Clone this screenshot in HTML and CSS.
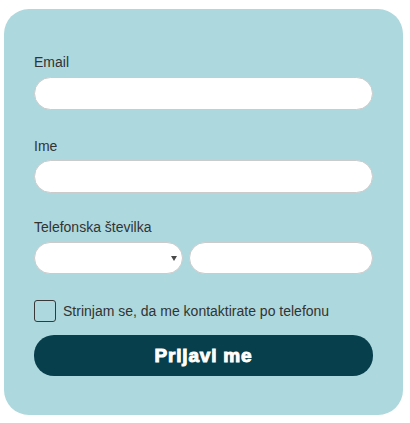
FILE: index.html
```html
<!DOCTYPE html>
<html>
<head>
	<meta charset="utf-8">
	<title>Prijava</title>
	<link rel="stylesheet" href="styles.css">
</head>
<body>
<form class="signup">
	<div class="field">
		<label class="field_name" for="email">Email</label>
		<input class="text_input" type="email" id="email">
	</div>
	<div class="field">
		<label class="field_name" for="name">Ime</label>
		<input class="text_input" type="text" id="name">
	</div>
	<div class="field field_phone">
		<label class="field_name" for="phone">Telefonska številka</label>
		<div class="phone_row">
			<div class="select_wrap">
				<select class="text_input" name="prefix"></select>
			</div>
			<input class="text_input" type="tel" id="phone">
		</div>
	</div>
	<label class="consent">
		<input type="checkbox" class="consent_box">
		<span>Strinjam se, da me kontaktirate po telefonu</span>
	</label>
	<button type="submit" class="submit">Prijavi me</button>
</form>
</body>
</html>
```

FILE: styles.css
```css
body {
	margin: 0;
	font-family: "Liberation Sans", Arial, sans-serif;
	background: white;
}
.signup {
	box-sizing: border-box;
	width: 399px;
	margin: 9px 0 0 4px;
	padding: 45px 30px 39px;
	background: #add8dd;
	border-radius: 25px;
}
.field {
	margin-bottom: 28px;
}
.field_phone {
	margin-bottom: 26px;
}
.field_name {
	display: block;
	font-size: 14px;
	line-height: 16px;
	color: #333;
	margin-bottom: 7px;
}
.field:nth-child(2) {
	margin-bottom: 26px;
}
.field:nth-child(2) .field_name {
	margin-bottom: 6px;
}
.text_input {
	box-sizing: border-box;
	display: block;
	width: 100%;
	height: 33px;
	margin: 0;
	padding: 0 14px;
	background: white;
	border: 1px solid #cbcbcb;
	border-radius: 17px;
	font-family: "Liberation Sans", Arial, sans-serif;
	font-size: 14px;
	outline: none;
}
.phone_row {
	display: grid;
	grid-template-columns: 149px 1fr;
	gap: 6px;
}
.phone_row .text_input {
	height: 32px;
}
.select_wrap {
	position: relative;
}
.select_wrap select {
	-webkit-appearance: none;
	appearance: none;
}
.select_wrap::after {
	content: "";
	position: absolute;
	right: 6px;
	top: 14px;
	border-left: 3px solid transparent;
	border-right: 3px solid transparent;
	border-top: 5px solid #4a4a4a;
}
.consent {
	display: flex;
	align-items: center;
	gap: 7px;
	font-size: 14px;
	line-height: 16px;
	color: #333;
	margin-bottom: 13px;
}
.consent_box {
	-webkit-appearance: none;
	appearance: none;
	box-sizing: border-box;
	width: 22px;
	height: 22px;
	margin: 0;
	border: 1.5px solid #383838;
	border-radius: 3px;
	background: transparent;
}
.submit {
	display: block;
	width: 100%;
	height: 41px;
	border: none;
	border-radius: 20px;
	background: #083f4d;
	color: white;
	font-family: "Liberation Sans", Arial, sans-serif;
	font-size: 19px;
	font-weight: bold;
	letter-spacing: 0.8px;
	-webkit-text-stroke: 1px white;
	cursor: pointer;
}
```
